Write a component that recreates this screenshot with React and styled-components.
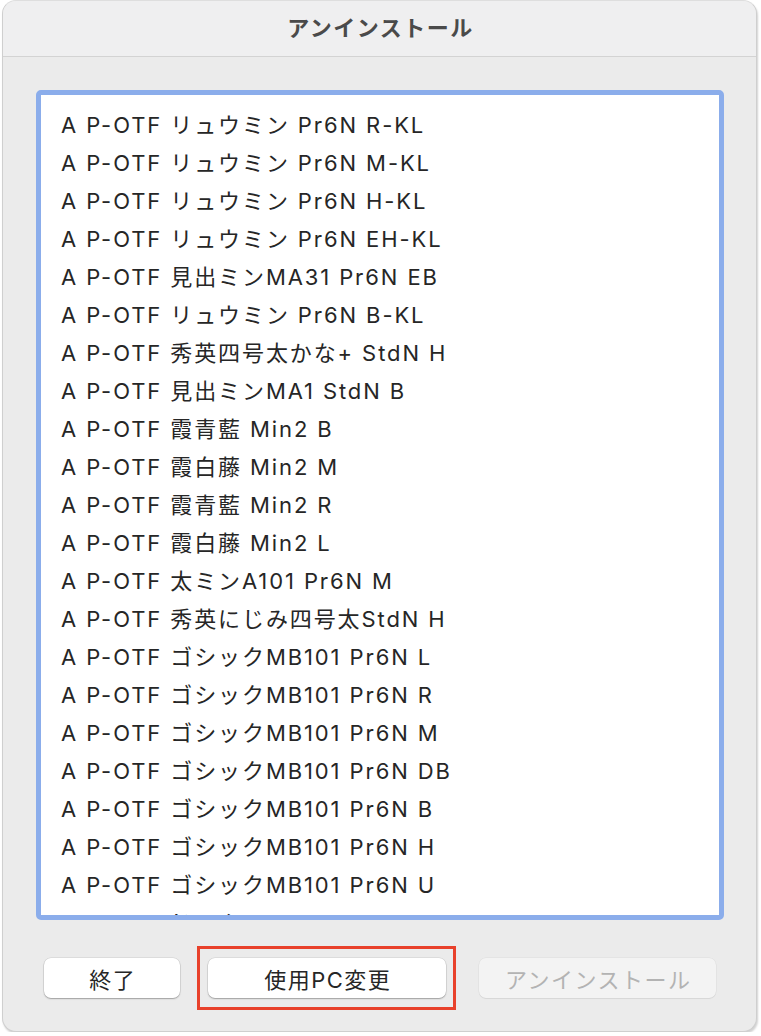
import styled, { createGlobalStyle } from "styled-components";

const fontes = [
    "A P-OTF リュウミン Pr6N R-KL",
    "A P-OTF リュウミン Pr6N M-KL",
    "A P-OTF リュウミン Pr6N H-KL",
    "A P-OTF リュウミン Pr6N EH-KL",
    "A P-OTF 見出ミンMA31 Pr6N EB",
    "A P-OTF リュウミン Pr6N B-KL",
    "A P-OTF 秀英四号太かな+ StdN H",
    "A P-OTF 見出ミンMA1 StdN B",
    "A P-OTF 霞青藍 Min2 B",
    "A P-OTF 霞白藤 Min2 M",
    "A P-OTF 霞青藍 Min2 R",
    "A P-OTF 霞白藤 Min2 L",
    "A P-OTF 太ミンA101 Pr6N M",
    "A P-OTF 秀英にじみ四号太StdN H",
    "A P-OTF ゴシックMB101 Pr6N L",
    "A P-OTF ゴシックMB101 Pr6N R",
    "A P-OTF ゴシックMB101 Pr6N M",
    "A P-OTF ゴシックMB101 Pr6N DB",
    "A P-OTF ゴシックMB101 Pr6N B",
    "A P-OTF ゴシックMB101 Pr6N H",
    "A P-OTF ゴシックMB101 Pr6N U",
    "A P-OTF じゅんPro Pr6N 101",
];

const FONTE = `Inter, "Noto Sans CJK JP", sans-serif`;

export default function App() {
    return (
        <>
            <Global />
            <Janela>
                <BarraTitulo>アンインストール</BarraTitulo>
                <Conteudo>
                    <Lista>
                        {fontes.map((nome, i) => (
                            <Item key={i}>{nome}</Item>
                        ))}
                    </Lista>
                    <Botoes>
                        <Botao $largura={136}>終了</Botao>
                        <Destaque>
                            <Botao $largura={238}>使用PC変更</Botao>
                            <Marcacao />
                        </Destaque>
                        <Botao $largura={237} $desativado disabled>アンインストール</Botao>
                    </Botoes>
                </Conteudo>
            </Janela>
        </>
    );
}

const Global = createGlobalStyle`
    body {
        margin: 0;
        background: #ffffff;
        font-family: ${FONTE};
    }
`;

const Janela = styled.div`
    margin-left: 2px;
    width: 755px;
    height: 1032px;
    background-color: #ebebeb;
    border: 1px solid #cfcfcf;
    border-top-color: #dedede;
    border-radius: 14px;
    box-shadow: 1px 2px 2px rgba(0, 0, 0, 0.18);
    box-sizing: border-box;
    overflow: hidden;
    display: flex;
    flex-direction: column;
`;

const BarraTitulo = styled.div`
    height: 56px;
    flex-shrink: 0;
    display: flex;
    justify-content: center;
    align-items: center;
    background-color: #efeff0;
    border-bottom: 1px solid #d3d3d3;
    color: #4a4a4a;
    font-size: 22px;
    font-weight: 700;
    letter-spacing: 1.5px;
    padding: 0 0 6px 2px;
    box-sizing: border-box;
`;

const Conteudo = styled.div`
    display: flex;
    flex-direction: column;
    padding: 33px 0 0 33px;
`;

const Lista = styled.div`
    width: 688px;
    height: 830px;
    box-sizing: border-box;
    background-color: #ffffff;
    border: 5px solid #8badeb;
    border-radius: 5px;
    padding: 11px 0 0 20px;
    overflow: hidden;
`;

const Item = styled.div`
    height: 38px;
    line-height: 38px;
    font-size: 22px;
    letter-spacing: 1.9px;
    color: #262626;
    white-space: nowrap;
`;

const Botoes = styled.div`
    display: flex;
    align-items: center;
    margin-top: 38px;
    padding-left: 8px;
    gap: 28px;

    & > :last-child {
        margin-left: 5px;
    }
`;

const Destaque = styled.div`
    position: relative;
    display: flex;
`;

const Marcacao = styled.div`
    position: absolute;
    top: -12px;
    bottom: -12px;
    left: -11px;
    right: -10px;
    border: 3px solid #e8412b;
    pointer-events: none;
`;

const Botao = styled.button`
    width: ${props => props.$largura}px;
    height: 40px;
    border: none;
    border-radius: 7px;
    background-color: ${props => props.$desativado ? "#f3f3f3" : "#ffffff"};
    color: ${props => props.$desativado ? "#b3b3b3" : "#262626"};
    box-shadow: ${props => props.$desativado
        ? "0 0 0 0.5px rgba(0,0,0,0.06), 0 1px 1px rgba(0,0,0,0.06)"
        : "0 0 0 0.5px rgba(0,0,0,0.12), 0 1px 1.5px rgba(0,0,0,0.28)"};
    font-family: ${FONTE};
    font-size: 22px;
    letter-spacing: 1.5px;
    padding: 0 0 0 1.5px;
    display: flex;
    justify-content: center;
    align-items: center;
    cursor: pointer;
`;
